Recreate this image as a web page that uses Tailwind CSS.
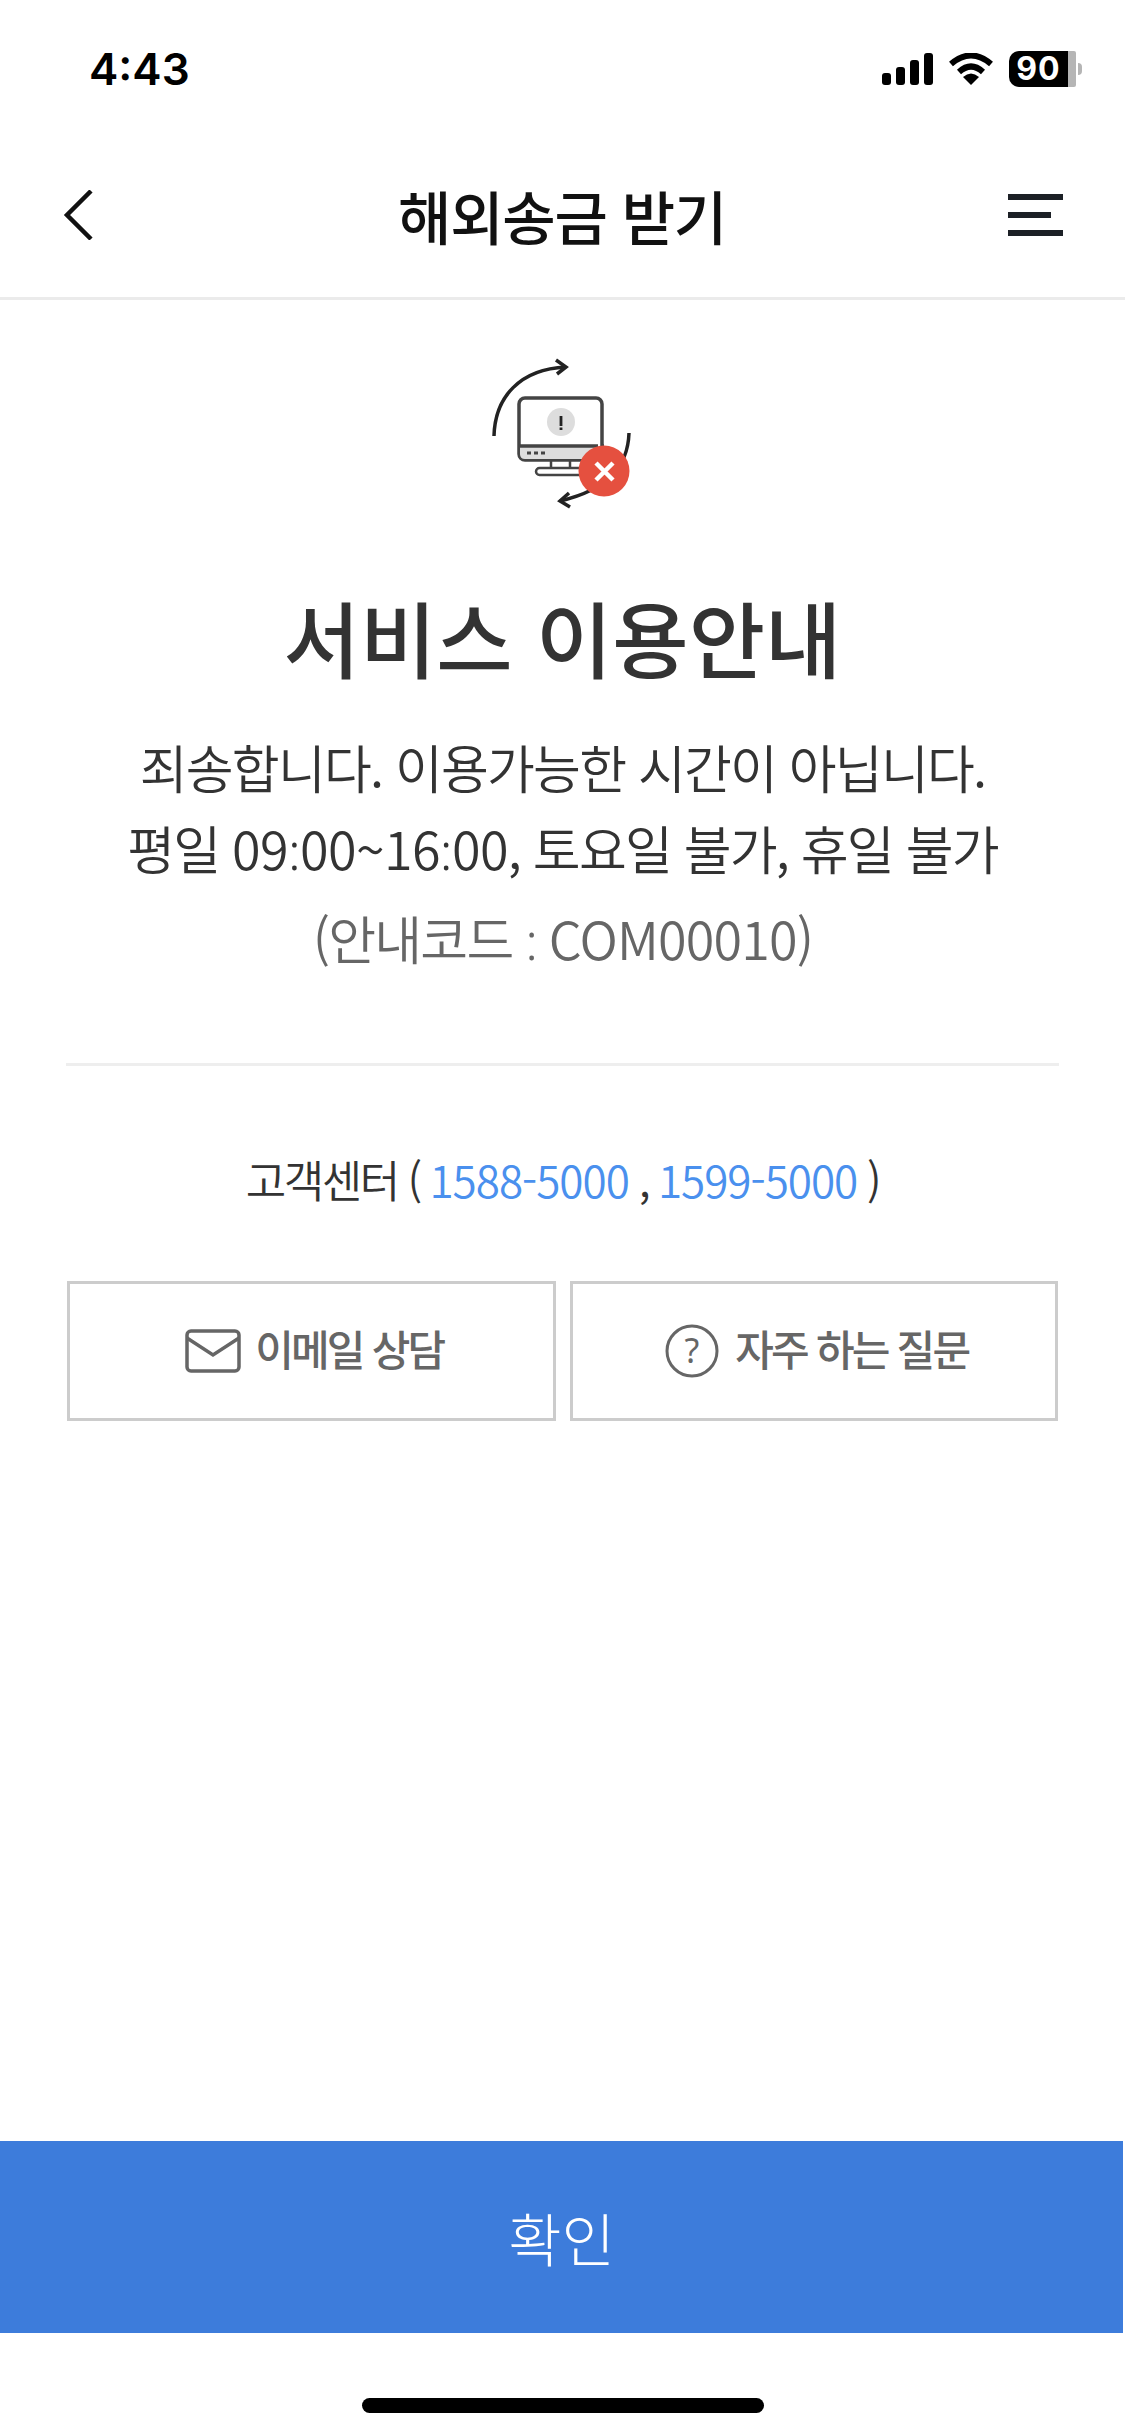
<!DOCTYPE html>
<html lang="ko">
<head>
    <meta charset="UTF-8">
    <meta name="viewport" content="width=device-width, initial-scale=1.0">
    <title>해외송금 받기</title>
    <script src="https://cdn.jsdelivr.net/npm/@tailwindcss/browser@4"></script>
</head>
<body class="bg-white font-['Noto_Sans_CJK_KR','Noto_Sans',sans-serif]">
    <div class="w-[1125px] h-[2436px] flex flex-col overflow-hidden">
        <!-- Status bar -->
        <div class="h-[136px] flex justify-between items-center pl-[89px] pr-[43px] pt-[1px]">
            <span class="font-['Inter',sans-serif] text-[44px] font-semibold leading-none text-black">4:43</span>
            <div class="flex items-center gap-[15px]">
                <svg width="51" height="32" viewBox="0 0 51 32"><rect x="0" y="20" width="9" height="12" rx="3"/><rect x="14" y="14" width="9" height="18" rx="3"/><rect x="28" y="7" width="9" height="25" rx="3"/><rect x="42" y="0" width="9" height="32" rx="3"/></svg>
                <svg width="46" height="32" viewBox="0 0 46 32"><path d="M3 11 Q23 -6 43 11" fill="none" stroke="black" stroke-width="6"/><path d="M11 19 Q23 8 35 19" fill="none" stroke="black" stroke-width="6"/><path d="M15 24 Q23 17 31 24 L23 32 Z"/></svg>
                <div class="flex items-center">
                    <div class="w-[67px] h-[36px] bg-black rounded-l-[10px] rounded-r-[2px] border-r-[8px] border-[#b5b5b5] flex items-center justify-center">
                        <span class="font-['Inter',sans-serif] text-[32px] font-bold text-white leading-none tracking-[1px]">90</span>
                    </div>
                    <div class="w-[4px] h-[12px] bg-[#b5b5b5] rounded-r-full ml-[2px]"></div>
                </div>
            </div>
        </div>

        <!-- Nav -->
        <div class="h-[164px] grid grid-cols-[1fr_auto_1fr] items-center pl-[63px] pr-[62px] pb-[4px] border-b-[3px] border-[#ebebeb]">
            <svg width="30" height="50" viewBox="0 0 30 50" fill="none" stroke="#111" stroke-width="4.5"><path d="M28 1 L4 25 L28 49"/></svg>
            <h1 class="mr-[2px] text-[58px] font-medium tracking-[-1.2px] text-[#111] leading-none">해외송금 받기</h1>
            <div class="w-[55px] justify-self-end flex flex-col gap-[12px]">
                <div class="h-[6px] bg-[#1c2026]"></div>
                <div class="h-[6px] w-[43px] bg-[#1c2026]"></div>
                <div class="h-[6px] bg-[#1c2026]"></div>
            </div>
        </div>

        <!-- Message -->
        <div class="flex flex-col items-center pt-[55px]">
            <svg width="160" height="160" viewBox="0 0 160 160" fill="none" class="mr-[9px]">
                <path d="M16 81 C17 42 42 14 88 12" stroke="#222" stroke-width="3.5"/>
                <path d="M78 5 L88 12 L79 19" stroke="#222" stroke-width="3.5"/>
                <rect x="41" y="43" width="83" height="62" rx="6" fill="#fff" stroke="#444" stroke-width="3.5"/>
                <path d="M42 91 H123 V99 Q123 104 118 104 H47 Q42 104 42 99 Z" fill="#ddd"/>
                <path d="M41 91 H120 M123 91 H126" stroke="#444" stroke-width="3.5"/>
                <circle cx="83" cy="67" r="14" fill="#ddd"/>
                <path d="M83 61 V71 M83 72.5 V75" stroke="#222" stroke-width="2.8"/>
                <path d="M49 98 H53 M56 98 H60 M63 98 H67" stroke="#444" stroke-width="3"/>
                <path d="M73 105 V113 M92 105 V113 M109 105 V113" stroke="#444" stroke-width="2.5"/>
                <rect x="58" y="113" width="70" height="7" rx="3.5" fill="#fff" stroke="#444" stroke-width="2.5"/>
                <path d="M151 78 C150 108 134 134 82 146" stroke="#222" stroke-width="3.5"/>
                <path d="M91 138 L82 146 L92 152" stroke="#222" stroke-width="3.5"/>
                <circle cx="126" cy="116" r="25.5" fill="#e5503f"/>
                <path d="M118 108 L135 125 M135 108 L118 125" stroke="#fff" stroke-width="4.5"/>
            </svg>
            <h2 class="mt-[73px] text-[83px] font-medium text-[#333] leading-[96px]">서비스 이용안내</h2>
            <p class="mt-[42px] text-[52px] font-[350] tracking-[-1.8px] text-[#333] leading-[81px] text-center">죄송합니다. 이용가능한 시간이 아닙니다.<br>평일 <span class="tracking-[-0.6px]">09<span class="font-['Noto_Sans'] leading-none">:</span>00~16<span class="font-['Noto_Sans'] leading-none">:</span>00</span>, 토요일 불가, 휴일 불가</p>
            <p class="mt-[9px] text-[52px] font-[350] tracking-[-1.8px] text-[#666] leading-[81px]">(안내코드 <span class="font-['Noto_Sans'] leading-none">:</span> <span class="tracking-[-0.8px]">COM00010</span>)</p>
        </div>

        <div class="mx-[66px] mt-[85px] h-[3px] bg-[#eee]"></div>

        <!-- Customer center -->
        <p class="mt-[81px] text-center text-[44px] font-[350] tracking-[-2.5px] text-[#333] leading-[64px]">고객센터 ( <span class="tracking-[-1px] text-[#4a90ee]">1588-5000</span> , <span class="tracking-[-1px] text-[#4a90ee]">1599-5000</span> )</p>

        <div class="mx-[67px] mt-[70px] grid grid-cols-2 gap-[14px]">
            <div class="h-[140px] border-[3px] border-[#ccc] flex items-center justify-center gap-[14px] pl-[6px]">
                <svg width="56" height="44" viewBox="0 0 56 44" fill="none" stroke="#666" stroke-width="3.5"><rect x="2" y="2" width="52" height="40" rx="4"/><path d="M2 9 L28 26 L54 9"/></svg>
                <span class="text-[42px] font-medium tracking-[-2.8px] text-[#666] leading-none pb-[7px]">이메일 상담</span>
            </div>
            <div class="h-[140px] border-[3px] border-[#ccc] flex items-center justify-center gap-[16px] pl-[6px]">
                <svg width="54" height="54" viewBox="0 0 54 54" fill="none"><circle cx="27" cy="27" r="25" stroke="#666" stroke-width="3"/><text x="27" y="39" text-anchor="middle" font-size="34" fill="#666" font-family="Noto Sans">?</text></svg>
                <span class="text-[42px] font-medium tracking-[-2.8px] text-[#666] leading-none pb-[7px]">자주 하는 질문</span>
            </div>
        </div>

        <!-- Confirm -->
        <div class="mt-auto mb-[103px] mr-[2px] h-[192px] bg-[#3d7cdb] flex items-center justify-center">
            <span class="text-[58px] font-light text-white leading-none">확인</span>
        </div>
        <div class="absolute left-[362px] top-[2398px] w-[402px] h-[15px] rounded-full bg-black"></div>
    </div>
</body>
</html>
